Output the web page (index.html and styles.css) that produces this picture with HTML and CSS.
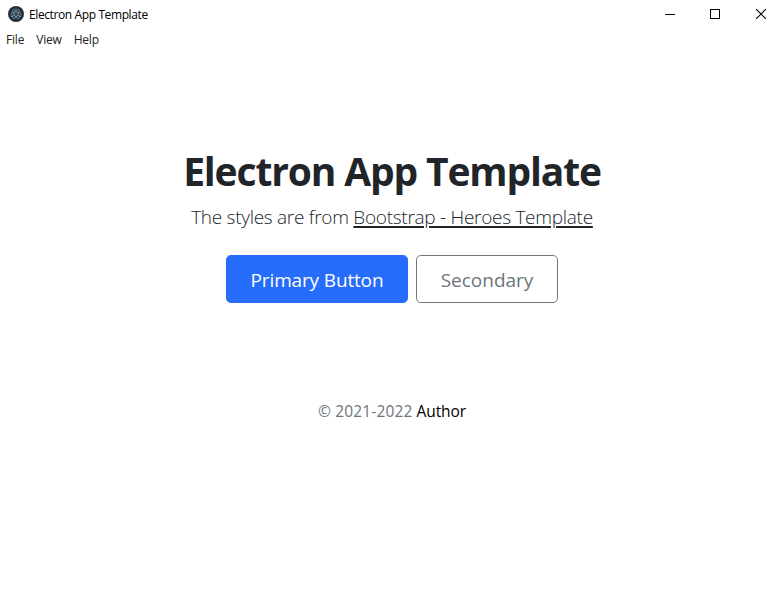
FILE: index.html
```html
<!DOCTYPE html>
<html lang="en">
<head>
<meta charset="utf-8">
<title>Electron App Template</title>
<link rel="stylesheet" href="styles.css">
</head>
<body>
<header class="titlebar">
  <svg class="app-icon" width="16" height="16" viewBox="0 0 16 16">
    <circle cx="8" cy="8" r="8" fill="#2b2e3a"/>
    <g fill="none" stroke="#9feaf9" stroke-width=".6" opacity=".65">
      <ellipse cx="8" cy="8" rx="5.200" ry="2.100"/>
      <ellipse cx="8" cy="8" rx="5.200" ry="2.100" transform="rotate(60 8 8)"/>
      <ellipse cx="8" cy="8" rx="5.200" ry="2.100" transform="rotate(120 8 8)"/>
    </g>
    <g fill="#9feaf9" opacity=".8"><circle cx="8" cy="8" r=".5"/><circle cx="3.600" cy="10.500" r=".6"/><circle cx="12.400" cy="10.500" r=".6"/><circle cx="8" cy="3" r=".5"/></g>
  </svg>
  <span class="app-name">Electron App Template</span>
  <div class="controls">
    <svg width="46" height="28" shape-rendering="crispEdges"><path d="M11 14h10v1H11z"/></svg>
    <svg width="46" height="28" shape-rendering="crispEdges"><path d="M10.5 9.500h9v9h-9z" fill="none" stroke="#000"/></svg>
    <svg width="28" height="28"><path d="M10.200 9.200l9.600 9.600M19.800 9.200l-9.600 9.600" fill="none" stroke="#000" stroke-width="1.100"/></svg>
  </div>
</header>
<nav class="menu"><span>File</span><span>View</span><span>Help</span></nav>
<main class="hero">
  <h1>Electron App Template</h1>
  <p class="lead">The styles are from <a href="#">Bootstrap - Heroes Template</a></p>
  <div class="buttons">
    <button class="btn primary">Primary Button</button>
    <button class="btn secondary">Secondary</button>
  </div>
</main>
<footer><span class="years">© 2021-2022</span> <a href="#">Author</a></footer>
</body>
</html>
```
FILE: styles.css
```css
* { box-sizing: border-box; }
body {
  margin: 0;
  height: 591px;
  overflow: hidden;
  background: #fff;
  color: #212529;
  font-family: "Open Sans", "Noto Sans", sans-serif;
}
.titlebar { display: flex; height: 28px; align-items: center; padding-left: 8px; color: #000; }
.app-name { margin-left: 5px; padding-top: 2px; font-size: 12px; line-height: 16px; letter-spacing: -0.39px; white-space: nowrap; }
.controls { display: flex; margin-left: auto; margin-right: 10px; }
.menu { display: flex; gap: 12px; height: 24px; padding-left: 6px; font-size: 12px; line-height: 24px; color: #222; letter-spacing: -0.2px; }
.hero { padding-top: 95px; text-align: center; }
h1 { margin: 0 0 8px; font-size: 39px; line-height: 48px; font-weight: 700; letter-spacing: -1.15px; white-space: nowrap; }
.lead { margin: 0 0 23px; font-size: 19px; line-height: 29px; font-weight: 300; letter-spacing: -0.28px; white-space: nowrap; }
.lead a { color: inherit; text-decoration: underline; text-decoration-thickness: 2px; text-underline-offset: 2px; }
.buttons { display: flex; justify-content: center; gap: 8px; }
.btn { height: 48px; padding: 0; border: 1px solid; border-radius: 4.8px; font: 400 19px/30px "Open Sans", "Noto Sans", sans-serif; letter-spacing: -0.15px; white-space: nowrap; }
.btn { padding-top: 2px; }
.primary { width: 182px; color: #fff; background: #256dfa; border-color: #256dfa; }
.secondary { width: 142px; color: #6c757d; background: #fff; border-color: #6c757d; letter-spacing: 0; }
footer { margin-top: 96px; text-align: center; font-size: 15.5px; line-height: 24px; color: #6c757d; }
.years { letter-spacing: 0.15px; }
footer a { color: #000; text-decoration: none; letter-spacing: -0.1px; }
```
